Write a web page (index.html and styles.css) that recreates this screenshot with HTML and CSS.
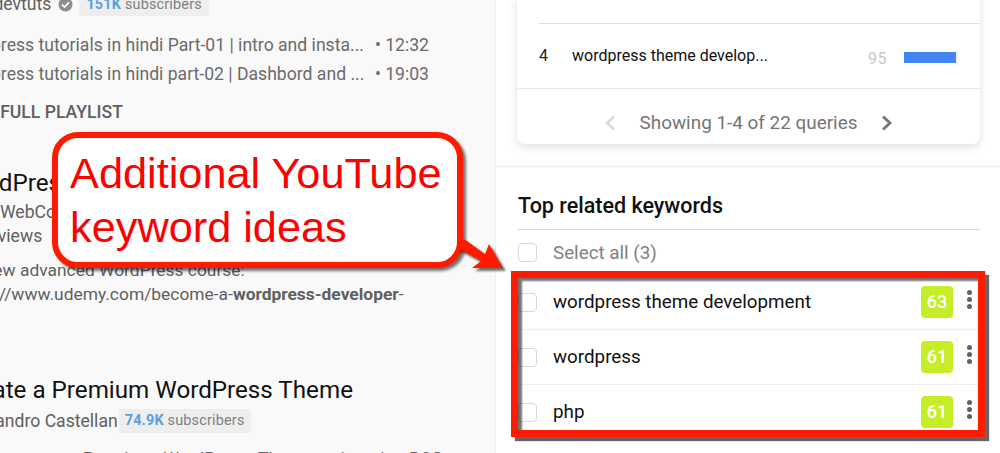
FILE: index.html
```html
<!DOCTYPE html>
<html lang="en">
<head>
<meta charset="utf-8">
<title>Top related keywords</title>
<link rel="stylesheet" href="styles.css">
</head>
<body>
<div class="page">
  <section class="results">
    <div class="results-inner">
      <div class="channel first">
        <span class="channel-name">webdevtuts</span>
        <svg class="verified" viewBox="0 0 16 16" width="15" height="15"><circle cx="8" cy="8" r="7.5" fill="#8f8f8f"/><path d="M4.4 8.2l2.5 2.5 4.8-5" fill="none" stroke="#fff" stroke-width="1.8"/></svg>
        <span class="subs"><b>151K</b> subscribers</span>
      </div>
      <div class="track one"><span class="track-title">wordpress tutorials in hindi Part-01 | intro and insta...</span><span class="track-time">• 12:32</span></div>
      <div class="track two"><span class="track-title">wordpress tutorials in hindi part-02 | Dashbord and ...</span><span class="track-time">• 19:03</span></div>
      <div class="playlist">VIEW FULL PLAYLIST</div>
      <h2 class="title t1">WordPress Theme Development</h2>
      <div class="meta m1">WebCourses</div>
      <div class="meta m2">1.2K views</div>
      <p class="desc d1">Our new advanced WordPress course:</p>
      <p class="desc d2">https://www.udemy.com/become-a-<b>wordpress-developer</b>-</p>
      <h2 class="title t2">Create a Premium WordPress Theme</h2>
      <div class="channel second">
        <span class="channel-name">Alessandro Castellan</span><span class="subs tight"><b>74.9K</b> subscribers</span>
      </div>
      <p class="desc d3">Premium WordPress Theme using the BOS</p>
    </div>
  </section>
  <section class="panel">
    <div class="card">
      <div class="query">
        <span class="q-num">4</span>
        <span class="q-text">wordpress theme develop...</span>
        <span class="q-score">95</span>
        <span class="q-bar"><span class="q-fill"></span></span>
      </div>
      <div class="pager">
        <svg class="chev" viewBox="0 0 12 16" width="12" height="16"><path d="M10 1.5L3 8l7 6.5" fill="none" stroke="#d9d9d9" stroke-width="2.4"/></svg>
        <span class="pager-text">Showing 1-4 of 22 queries</span>
        <svg class="chev" viewBox="0 0 12 16" width="12" height="16"><path d="M2 1.5L9 8l-7 6.5" fill="none" stroke="#757575" stroke-width="2.8"/></svg>
      </div>
    </div>
    <div class="related">
      <h3 class="related-title">Top related keywords</h3>
      <div class="select-all"><span class="box"></span><span>Select all (3)</span></div>
      <div class="kw"><span class="box"></span><span class="kw-text">wordpress theme development</span><span class="score">63</span><span class="dots"><i></i><i></i><i></i></span></div>
      <div class="kw"><span class="box"></span><span class="kw-text">wordpress</span><span class="score">61</span><span class="dots"><i></i><i></i><i></i></span></div>
      <div class="kw"><span class="box"></span><span class="kw-text">php</span><span class="score">61</span><span class="dots"><i></i><i></i><i></i></span></div>
    </div>
  </section>
  <div class="callout">Additional YouTube<br>keyword ideas</div>
  <svg class="arrow" viewBox="0 0 60 42" width="60" height="42"><path class="arrow-shape" d="M10 3L31 18 35 8 49 32 18 32 27 25 3 12z"/></svg>
  <div class="redbox"></div>
</div>
</body>
</html>
```
FILE: styles.css
```css
* { box-sizing: border-box; }
html, body { margin: 0; padding: 0; }
body { width: 1000px; height: 453px; overflow: hidden; background: #fff; font-family: Roboto, "Liberation Sans", sans-serif; }
.page { position: relative; display: flex; width: 1000px; height: 453px; overflow: hidden; }

.results { flex: 0 0 496px; height: 453px; overflow: hidden; background: #f9f9f9; border-right: 1px solid #eeeeee; }
.results-inner { margin-left: -48px; margin-top: -9px; width: 560px; color: #606060; }

.channel { display: flex; align-items: center; white-space: nowrap; }
.channel.first { height: 26px; font-size: 17.6px; padding-left: 9px; }
.channel-name { color: #606060; }
.verified { margin-left: 7px; }
.subs { margin-left: 6px; padding: 0 7px; height: 23px; line-height: 23px; background: #eeeeee; font-size: 14.4px; color: #808080; letter-spacing: .2px; }
.subs b { color: #5aa0dc; font-weight: 700; }
.subs.tight { margin-left: 1px; height: 24px; line-height: 24px; padding: 0 6px; border-radius: 2px; }

.track { display: flex; justify-content: space-between; width: 477px; font-size: 17.6px; white-space: nowrap; color: #6b6b6b; height: 29px; line-height: 29px; }
.track.one { margin-top: 14px; }
.playlist { margin-top: 13px; padding-left: 2px; font-size: 17.6px; font-weight: 500; color: #606060; line-height: 20px; }

.title { margin: 0; padding-left: 4px; font-weight: 400; font-size: 24.2px; color: #111; line-height: 30px; white-space: nowrap; }
.title.t1 { margin-top: 46px; }
.title.t2 { margin-top: 69px; }
.meta { font-size: 17.6px; line-height: 23px; color: #606060; }
.meta.m1 { margin-top: 3px; padding-left: 48px; }
.meta.m2 { margin-top: 1px; padding-left: 6px; }
.desc { margin: 0; padding-left: 3px; font-size: 17.4px; line-height: 24px; color: #606060; white-space: nowrap; }
.desc.d1 { margin-top: 10px; padding-left: 0; }
.channel.second { height: 24px; font-size: 17.6px; margin-top: 4px; }
.desc.d3 { margin-top: 13px; padding-left: 131px; word-spacing: 6px; }

.panel { flex: 1; min-width: 0; height: 453px; overflow: hidden; background: #fff; }
.card { margin: -4px 20px 0 21px; height: 148px; background: #fff; border-radius: 0 0 8px 8px; box-shadow: 0 3px 10px rgba(0,0,0,.13); }
.query { position: relative; display: flex; align-items: center; height: 93px; padding: 0 0 0 22px; border-bottom: 1px solid #e8e8e8; }
.query::before { content: ""; position: absolute; top: 27px; left: 22px; right: 0; height: 1px; background: #e0e0e0; }
.q-num { width: 33px; font-size: 16px; color: #222; margin-top: 27px; }
.q-text { width: 296px; font-size: 16px; color: #111; margin-top: 27px; white-space: nowrap; }
.q-score { width: 36px; margin-top: 33px; font-size: 16px; color: #c8c8c8; letter-spacing: .6px; }
.q-bar { display: block; width: 54px; height: 11px; margin-top: 31px; background: #f1f1f1; }
.q-fill { display: block; width: 52px; height: 11px; background: #4285f4; }
.pager { display: flex; align-items: center; justify-content: center; height: 55px; gap: 24px; padding-top: 12px; }
.pager-text { font-size: 18.9px; color: #757575; }

.related { margin-top: 22px; padding: 0 20px 0 22px; border-top: 1px solid #ededed; }
.related-title { margin: 0; padding-top: 26px; padding-bottom: 10px; font-size: 21.5px; line-height: 26px; font-weight: 500; color: #111; border-bottom: 1px solid #d9d9d9; }
.select-all { display: flex; align-items: center; height: 45px; font-size: 18.8px; color: #808080; }
.box { flex: none; width: 19px; height: 19px; border: 1px solid #d8d8d8; border-radius: 4px; margin-right: 16px; background: #fff; }
.kw { display: flex; align-items: center; height: 55px; font-size: 18.8px; color: #111; border-bottom: 1px solid #eeeeee; }
.kw-text { flex: 1; white-space: nowrap; }
.score { flex: none; width: 32px; height: 32px; line-height: 32px; text-align: center; font-size: 18px; font-weight: 500; color: #fff; background: #c6ee26; border-radius: 4px; }
.dots { display: flex; flex-direction: column; gap: 2px; width: 5px; margin-left: 14px; margin-right: 8px; margin-top: -5px; }
.dots i { display: block; width: 5px; height: 5px; border-radius: 50%; background: #616161; }

.callout { position: absolute; left: 52px; top: 132px; width: 411px; height: 136px; padding: 8px 0 0 12px; background: #fff; border: 6px solid #ff1a00; border-radius: 26px; font-family: "Liberation Sans", Arial, sans-serif; font-size: 43.3px; line-height: 54px; color: #ff0000; white-space: nowrap; box-shadow: 3px 3px 3px rgba(0,0,0,.55); }
.arrow { position: absolute; left: 454px; top: 236px; }
.arrow-shape { fill: #ff1a00; filter: drop-shadow(3px 3px 1px rgba(0,0,0,.55)); }
.redbox { position: absolute; left: 511px; top: 271px; width: 474px; height: 166px; border: 7px solid #ff1a00; box-shadow: 4px 4px 1px rgba(0,0,0,.6), inset 4px 3px 2px rgba(0,0,0,.55); }
```
